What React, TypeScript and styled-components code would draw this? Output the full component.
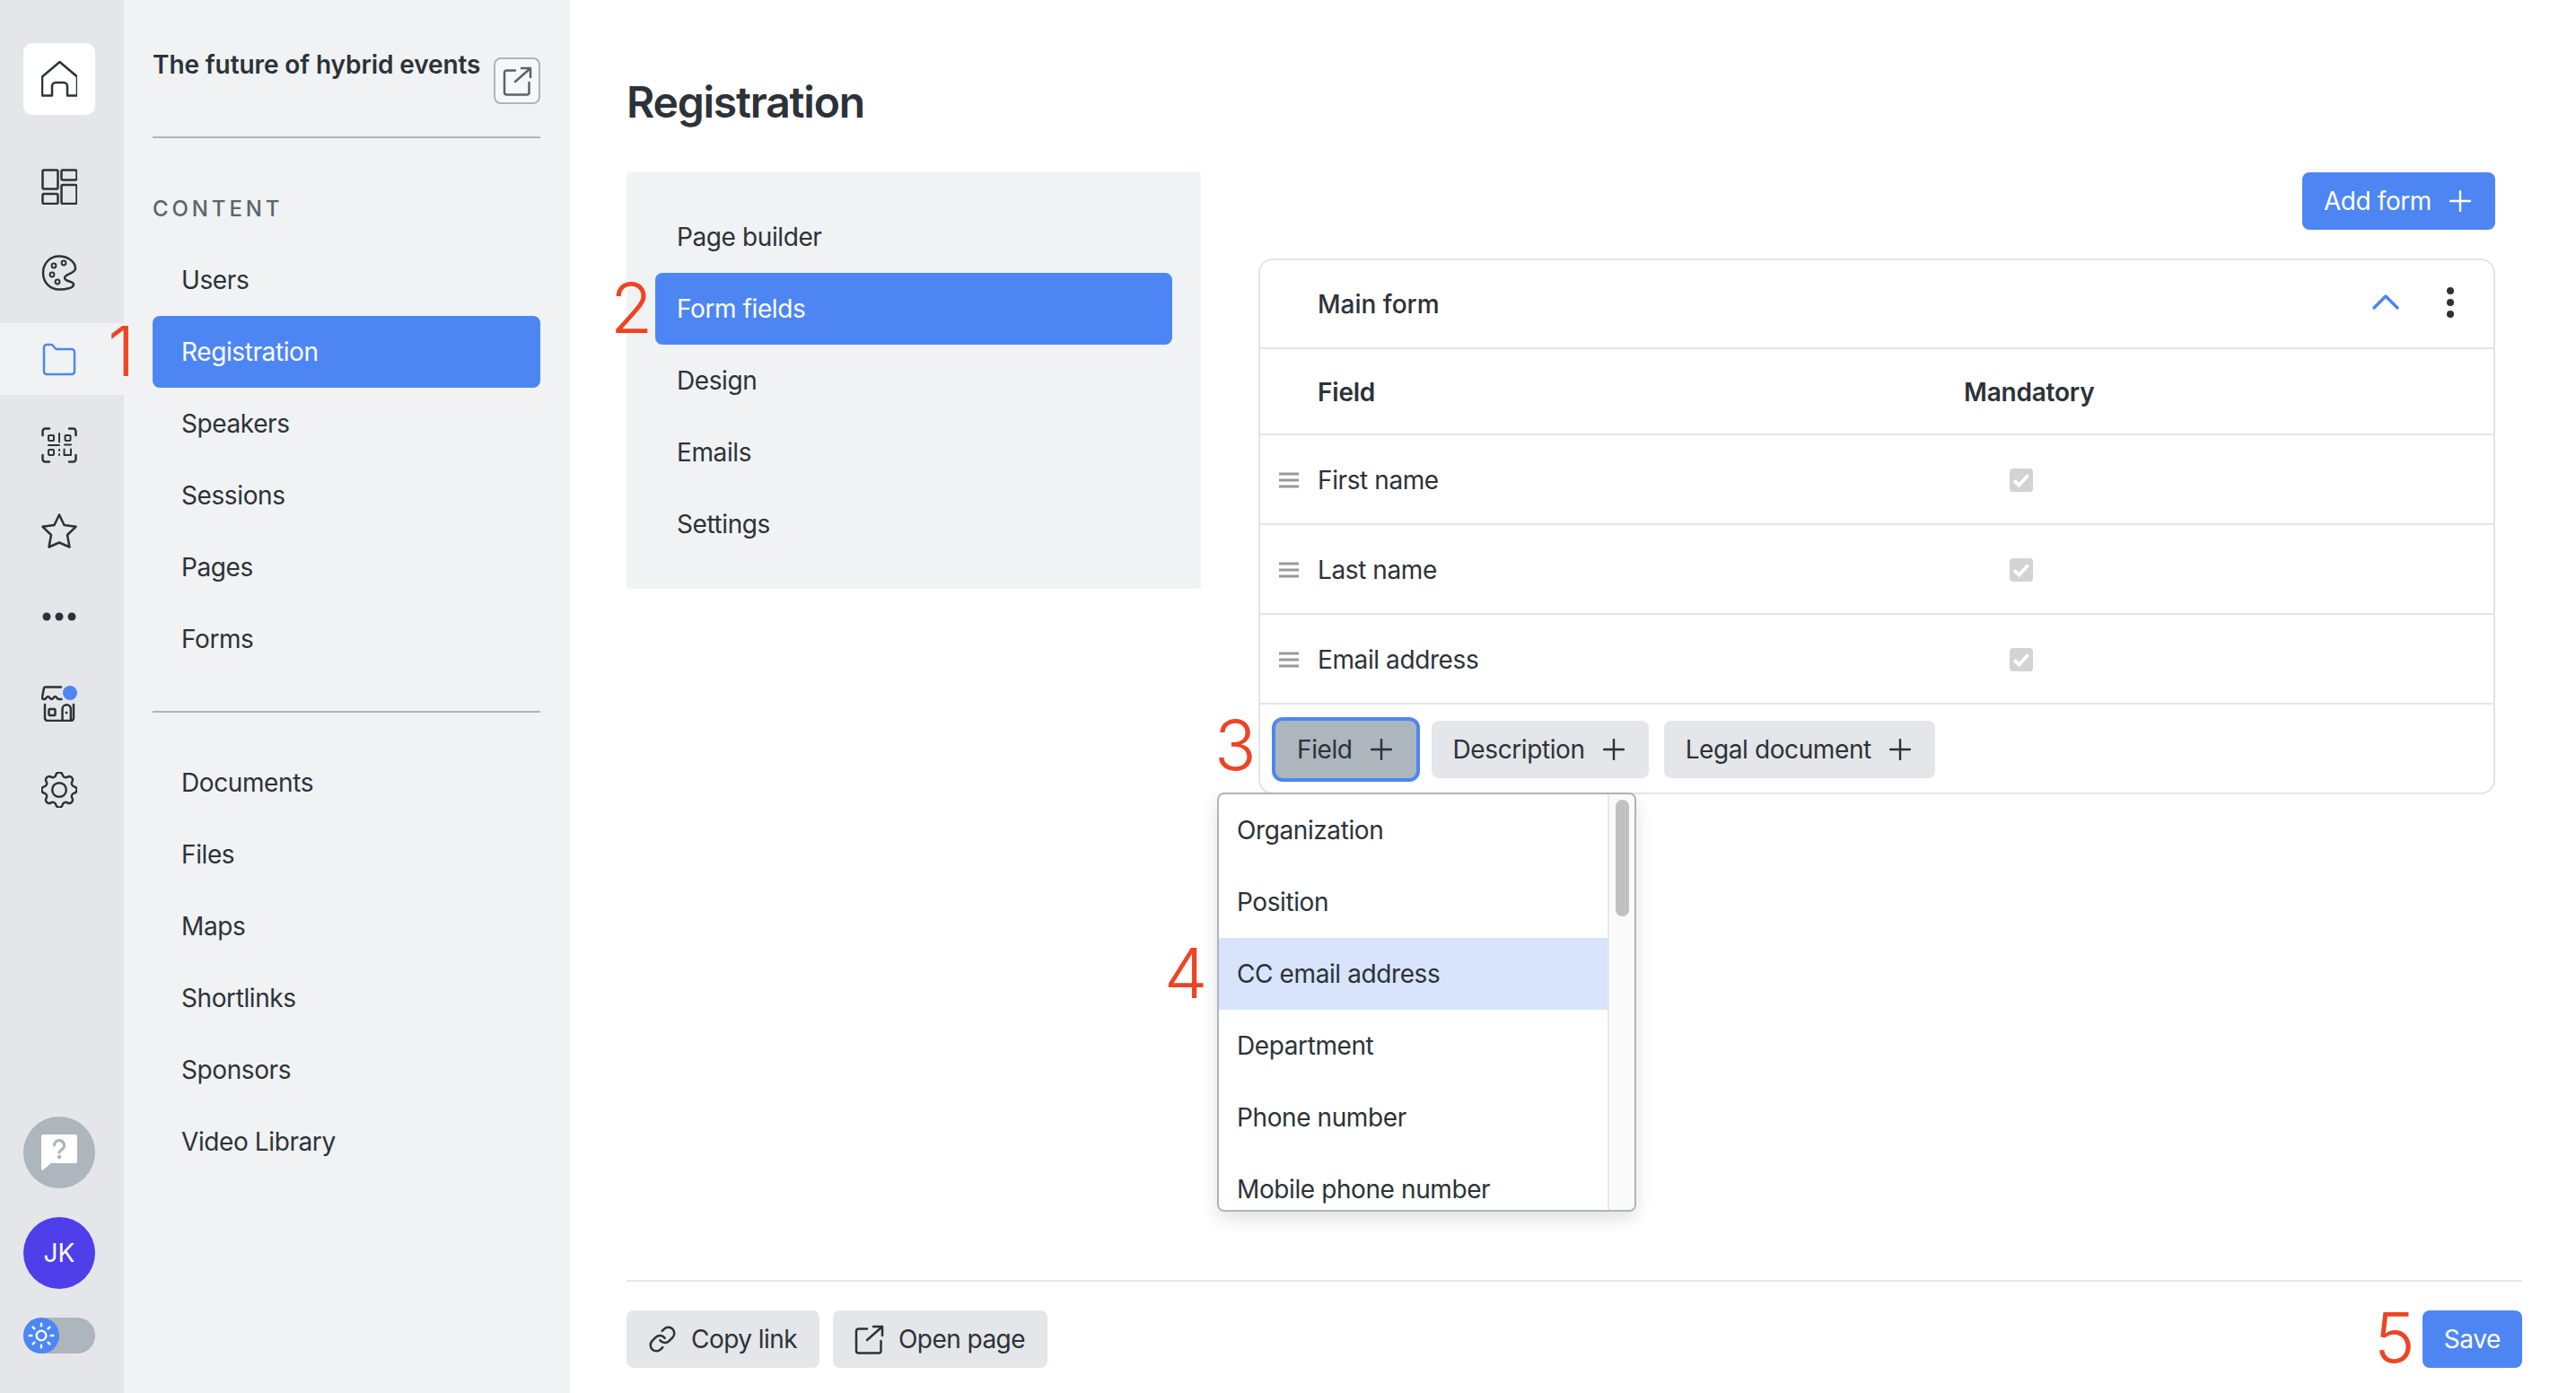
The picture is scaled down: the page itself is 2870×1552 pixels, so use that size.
import React from "react";
import styled, { createGlobalStyle } from "styled-components";
import { Link as LinkIcon, Sun } from "lucide-react";

const Global = createGlobalStyle`
  html, body { margin: 0; padding: 0; background: #fff; }
  body { font-family: Inter, "Noto Sans", sans-serif; color: #2c3238; }
  * { box-sizing: border-box; }
`;

const BLUE = "#4d86f3";
const INK = "#2c3238";

const Page = styled.div`
  position: relative;
  display: flex;
  width: 2870px;
  height: 1552px;
  overflow: hidden;
  font-size: 28px;
  line-height: 32px;
  letter-spacing: -0.4px;
`;

const Rail = styled.nav`
  display: flex;
  flex-direction: column;
  align-items: center;
  width: 138px;
  flex: none;
  padding: 48px 0 44px;
  background: #e4e6e9;
`;

const HomeButton = styled.div`
  display: flex;
  align-items: center;
  justify-content: center;
  width: 80px;
  height: 80px;
  margin: 0 6px 40px 0;
  background: #fff;
  border-radius: 10px;
`;

const RailList = styled.div`
  display: flex;
  flex-direction: column;
  gap: 16px;
  width: 100%;
`;

const RailItem = styled.div<{ $active?: boolean }>`
  display: flex;
  align-items: center;
  justify-content: center;
  height: 80px;
  padding-right: 6px;
  background: ${(p) => (p.$active ? "#f0f2f4" : "transparent")};
`;

const RailFoot = styled.div`
  display: flex;
  flex-direction: column;
  align-items: center;
  gap: 32px;
  margin-top: auto;
  padding-right: 6px;
`;

const Round = styled.div<{ $bg: string }>`
  display: flex;
  align-items: center;
  justify-content: center;
  width: 80px;
  height: 80px;
  border-radius: 50%;
  background: ${(p) => p.$bg};
  color: #fff;
  font-size: 28px;
  letter-spacing: 0;
`;

const Toggle = styled.div`
  width: 80px;
  height: 40px;
  border-radius: 20px;
  background: #adb5bd;
`;

const Knob = styled.div`
  display: flex;
  align-items: center;
  justify-content: center;
  width: 40px;
  height: 40px;
  border-radius: 50%;
  background: ${BLUE};
  color: #fff;
`;

const Side = styled.aside`
  width: 497px;
  flex: none;
  padding: 56px 33px 0 32px;
  background: #f0f2f4;
`;

const SideHead = styled.div`
  display: flex;
  justify-content: space-between;
  align-items: flex-start;
  box-sizing: content-box;
  height: 96px;
  border-bottom: 2px solid #adb5bd;
`;

const EventTitle = styled.div`
  font-weight: 600;
  white-space: nowrap;
  letter-spacing: -0.1px;
`;

const SquareLink = styled.div`
  display: flex;
  align-items: center;
  justify-content: center;
  width: 52px;
  height: 52px;
  margin-top: 8px;
  border: 2px solid #adb5bd;
  border-radius: 8px;
  background: #f6f7f8;
  color: #59636c;
`;

const Eyebrow = styled.div`
  margin: 63px 0 23px;
  font-size: 24px;
  font-weight: 500;
  letter-spacing: 3.9px;
  color: #5b656e;
`;

const SideNav = styled.div`
  display: flex;
  flex-direction: column;
`;

const NavItem = styled.div<{ $active?: boolean }>`
  display: flex;
  align-items: center;
  height: 80px;
  padding-left: 32px;
  border-radius: 8px;
  color: ${(p) => (p.$active ? "#fff" : INK)};
  background: ${(p) => (p.$active ? BLUE : "transparent")};
`;

const SideRule = styled.div`
  height: 2px;
  margin: 40px 0 38px;
  background: #adb5bd;
`;

const Main = styled.main`
  display: flex;
  flex-direction: column;
  flex: 1;
  padding: 82px 60px 28px 63px;
  min-width: 0;
`;

const Title = styled.h1`
  margin: 0 0 46px;
  font-size: 48px;
  line-height: 64px;
  font-weight: 600;
  letter-spacing: -1.2px;
`;

const Columns = styled.div`
  display: flex;
  gap: 64px;
  align-items: flex-start;
`;

const SubPanel = styled.div`
  display: flex;
  flex-direction: column;
  width: 640px;
  padding: 32px;
  background: #f0f2f4;
  border-radius: 4px;
`;

const SubItem = styled(NavItem)`
  padding-left: 24px;
`;

const FormColumn = styled.div`
  display: flex;
  flex-direction: column;
  align-items: flex-end;
  width: 1378px;
`;

const Button = styled.div<{ $variant?: "primary" | "muted" | "focus" }>`
  display: inline-flex;
  align-items: center;
  height: 64px;
  padding: 0 27px 0 24px;
  border-radius: 8px;
  gap: 20px;
  white-space: nowrap;
  background: ${(p) =>
    p.$variant === "primary" ? BLUE : p.$variant === "focus" ? "#adb5bd" : "#e4e6e9"};
  color: ${(p) => (p.$variant === "primary" ? "#fff" : INK)};
  box-shadow: ${(p) => (p.$variant === "focus" ? `0 0 0 4px ${BLUE}` : "none")};
`;

const Card = styled.section`
  position: relative;
  width: 100%;
  margin-top: 32px;
  border: 2px solid #e5e5e5;
  border-radius: 16px;
`;

const CardHead = styled.div`
  display: flex;
  align-items: center;
  height: 99px;
  padding: 0 44px 0 64px;
  border-bottom: 2px solid #e5e5e5;
`;

const CardName = styled.div`
  flex: 1;
  font-weight: 500;
  letter-spacing: 0;
`;

const Grid = styled.div<{ $head?: boolean }>`
  display: grid;
  grid-template-columns: 64px 720px 1fr;
  align-items: center;
  height: ${(p) => (p.$head ? "96px" : "100px")};
  padding-top: 2px;
  border-bottom: 2px solid #e5e5e5;
  font-weight: ${(p) => (p.$head ? 600 : 400)};
  letter-spacing: ${(p) => (p.$head ? "-0.2px" : "-0.4px")};
`;

const Grip = styled.div`
  padding-left: 21px;
  display: flex;
`;

const CheckBox = styled.div`
  display: flex;
  align-items: center;
  justify-content: center;
  width: 26px;
  height: 26px;
  margin-left: 51px;
  background: #d3d3d3;
  border-radius: 4px;
`;

const Actions = styled.div`
  display: flex;
  align-items: center;
  gap: 17px;
  height: 98px;
  padding: 2px 0 0 17px;
`;

const Menu = styled.div`
  position: absolute;
  left: -48px;
  top: 593px;
  display: flex;
  width: 467px;
  height: 467px;
  overflow: hidden;
  background: #fff;
  border: 2px solid #adb5bd;
  border-radius: 8px;
  box-shadow: 0 8px 20px rgba(0, 0, 0, 0.12);
`;

const MenuList = styled.div`
  flex: 1;
  overflow: hidden;
`;

const MenuItem = styled.div<{ $active?: boolean }>`
  display: flex;
  align-items: center;
  height: 80px;
  padding-left: 20px;
  background: ${(p) => (p.$active ? "#d7e4fb" : "transparent")};
`;

const Track = styled.div`
  width: 30px;
  flex: none;
  padding: 6px 6px 0 7px;
  background: #fafafa;
  border-left: 2px solid #e8e8e8;
`;

const Thumb = styled.div`
  width: 15px;
  height: 130px;
  border-radius: 8px;
  background: #c1c1c1;
`;

const Footer = styled.footer`
  display: flex;
  align-items: center;
  gap: 15px;
  margin-top: auto;
  padding-top: 32px;
  border-top: 2px solid #e5e5e5;
`;

const FooterButton = styled(Button)`
  padding: 0 25px 0 24px;
  gap: 16px;
  letter-spacing: -0.55px;
`;

const SaveButton = styled(Button)`
  margin-left: auto;
  padding: 0 24px;
`;

const ChevronSlot = styled.div`
  margin: 0 0 6px;
`;

const Kebab = styled.div`
  margin: 0 0 3px 52px;
`;

const Marker = styled.div<{ $x: number; $y: number }>`
  position: absolute;
  left: ${(p) => p.$x}px;
  top: ${(p) => p.$y}px;
  font-family: Inter, "Liberation Sans", sans-serif;
  font-weight: 300;
  font-size: 77px;
  line-height: 77px;
  letter-spacing: 0;
  color: #ee4423;
`;

const S = { fill: "none", stroke: "currentColor", strokeWidth: 2.5, strokeLinecap: "round", strokeLinejoin: "round" } as const;

const Ico = styled.svg<{ $c?: string }>`
  display: block;
  flex: none;
  color: ${(p) => p.$c || INK};
`;

const I: React.FC<{ children: React.ReactNode; c?: string; vb?: string; size?: number }> = ({ children, c, vb = "0 0 40 40", size = 40 }) => (
  <Ico $c={c} width={size} height={size} viewBox={vb} {...S}>
    {children}
  </Ico>
);

const HomeIcon = () => (
  <I>
    <path d="M1 17.5 20.5 1 40 17.5V38.5H29V28a4 4 0 0 0-4-4H16a4 4 0 0 0-4 4V38.5H1Z" />
  </I>
);

const DashIcon = () => (
  <I>
    <rect x="1.5" y="1.5" width="17" height="21" rx="1.5" />
    <rect x="22.5" y="1.5" width="17" height="11" rx="1.5" />
    <rect x="22.5" y="18" width="17" height="21" rx="1.5" />
    <rect x="1.5" y="28" width="17" height="11" rx="1.5" />
  </I>
);

const PaletteIcon = () => (
  <I>
    <path d="M20 1.5C9 1.5 2 10 2 20c0 11 8 18.5 18 18.5 7 0 16-1.500 16-5.500s-10-3-10-7.500S38 21 38 15C38 8 30 1.500 20 1.500Z" />
    <circle cx="14" cy="12" r="2.400" strokeWidth="2" />
    <circle cx="25" cy="9" r="2.400" strokeWidth="2" />
    <circle cx="12" cy="22" r="2.400" strokeWidth="2" />
    <circle cx="18" cy="30" r="2.400" strokeWidth="2" />
  </I>
);

const FolderIcon = () => (
  <I c={BLUE}>
    <path d="M3 7a3 3 0 0 1 3-3h6l4.500 5H34a3 3 0 0 1 3 3v22a3 3 0 0 1-3 3H6a3 3 0 0 1-3-3Z" />
  </I>
);

const QrIcon = () => (
  <I>
    <path d="M1.500 9V4.500a3 3 0 0 1 3-3H9M31 1.500h4.500a3 3 0 0 1 3 3V9M38.500 31v4.500a3 3 0 0 1-3 3H31M9 38.500H4.500a3 3 0 0 1-3-3V31" />
    <g strokeWidth="2">
      <rect x="8" y="9" width="6" height="6" rx="1" />
      <rect x="26.500" y="9" width="6" height="6" rx="1" />
      <rect x="8" y="25" width="6" height="6" rx="1" />
      <path d="M20 7v9.500M8 20h12M26 19.500h7M20 25v1M20 30v1M25.500 24.500V31H33v-6.500" />
    </g>
  </I>
);

const StarIcon = () => (
  <I>
    <path d="M20 1.500 25.500 13 38.500 14.800 29 24 31.500 37.500 20 32.500 8.500 37.500 11 24 1.500 14.800 14.500 13Z" />
  </I>
);

const DotsIcon = () => (
  <Ico width={40} height={40} viewBox="0 0 40 40">
    <g fill="currentColor">
      <circle cx="6" cy="19" r="4.500" />
      <circle cx="20" cy="19" r="4.500" />
      <circle cx="34" cy="19" r="4.500" />
    </g>
  </Ico>
);

const StoreIcon = () => (
  <I>
    <path d="M22 1.500H4.500A1.500 1.500 0 0 0 3 2.700L1 12.500c-.4 1.800 1 2.500 2.500 2.500 2 0 2.500-3 4-3s2 3 4 3 2.500-3 4-3 2 3 4 3h3" />
    <path d="M4 21v15a3 3 0 0 0 3 3h26a3 3 0 0 0 3-3V21" />
    <rect x="8.500" y="26" width="7" height="7" rx="1" />
    <path d="M23.500 39V26a4.700 4.700 0 0 1 9.400 0V39" />
    <circle cx="28" cy="30" r="1.500" fill="currentColor" stroke="none" />
    <circle cx="32" cy="8" r="8" fill={BLUE} stroke="none" />
  </I>
);

const GearIcon = () => (
  <I vb="2.800 2.800 18.400 18.400">
    <g strokeWidth="1.130">
      <path d="M10.325 4.317c.426 -1.756 2.924 -1.756 3.350 0a1.724 1.724 0 0 0 2.573 1.066c1.543 -.94 3.310 .826 2.370 2.370a1.724 1.724 0 0 0 1.065 2.572c1.756 .426 1.756 2.924 0 3.350a1.724 1.724 0 0 0 -1.066 2.573c.94 1.543 -.826 3.310 -2.370 2.370a1.724 1.724 0 0 0 -2.572 1.065c-.426 1.756 -2.924 1.756 -3.350 0a1.724 1.724 0 0 0 -2.573 -1.066c-1.543 .94 -3.310 -.826 -2.370 -2.370a1.724 1.724 0 0 0 -1.065 -2.572c-1.756 -.426 -1.756 -2.924 0 -3.350a1.724 1.724 0 0 0 1.066 -2.573c-.94 -1.543 .826 -3.310 2.370 -2.370c1 .608 2.296 .07 2.572 -1.065z" />
      <circle cx="12" cy="12" r="3.600" />
    </g>
  </I>
);

const HelpIcon = () => (
  <Ico width={40} height={40} viewBox="0 0 40 40">
    <path fill="#fff" d="M2 0H38a2 2 0 0 1 2 2V30a2 2 0 0 1-2 2H11L2 39.500A1.200 1.200 0 0 1 0 38.500V2A2 2 0 0 1 2 0Z" />
    <path fill="none" stroke="#adb5bd" strokeWidth="3.200" strokeLinecap="round" d="M14.500 12a5.500 5.500 0 1 1 8 5c-1.500 1-2.500 2-2.500 3" />
    <circle cx="20" cy="25" r="2.200" fill="#adb5bd" />
  </Ico>
);

const ExternalIcon: React.FC<{ c?: string }> = ({ c }) => (
  <I c={c} vb="0 0 33 33" size={33}>
    <path d="M14 4.500H4.500A2.500 2.500 0 0 0 2 7v22a2.500 2.500 0 0 0 2.500 2.500H27a2.500 2.500 0 0 0 2.500-2.500v-11M14 17 31 2M21 2h10v10" />
  </I>
);

const PlusIcon: React.FC<{ c?: string }> = ({ c }) => (
  <I c={c} vb="0 0 24 24" size={24}>
    <path strokeWidth="2.400" d="M1 12H23M12 1V23" />
  </I>
);

const ChevronIcon = () => (
  <I c={BLUE} vb="0 0 32 20" size={32}>
    <path strokeWidth="3.500" d="M3 17 16 4 29 17" />
  </I>
);

const KebabIcon = () => (
  <Ico width={8} height={34} viewBox="0 0 8 34">
    <g fill="currentColor">
      <circle cx="4" cy="4" r="4" />
      <circle cx="4" cy="17" r="4" />
      <circle cx="4" cy="30" r="4" />
    </g>
  </Ico>
);

const GripIcon = () => (
  <Ico width={22} height={18} viewBox="0 0 22 18">
    <path stroke="#999" strokeWidth="3" d="M0 2H22M0 9H22M0 16H22" />
  </Ico>
);

const CheckMark = () => (
  <Ico width={26} height={26} viewBox="0 0 26 26">
    <path fill="none" stroke="#fff" strokeWidth="4" d="M5 13.500 10.500 18.500 20.500 7.500" />
  </Ico>
);

const railIcons = [
  { key: "dash", node: <DashIcon /> },
  { key: "palette", node: <PaletteIcon /> },
  { key: "folder", node: <FolderIcon />, active: true },
  { key: "qr", node: <QrIcon /> },
  { key: "star", node: <StarIcon /> },
  { key: "dots", node: <DotsIcon /> },
  { key: "store", node: <StoreIcon /> },
  { key: "gear", node: <GearIcon /> },
];

const content = ["Users", "Registration", "Speakers", "Sessions", "Pages", "Forms"];
const library = ["Documents", "Files", "Maps", "Shortlinks", "Sponsors", "Video Library"];
const sub = ["Page builder", "Form fields", "Design", "Emails", "Settings"];
const fields = ["First name", "Last name", "Email address"];
const options = ["Organization", "Position", "CC email address", "Department", "Phone number", "Mobile phone number"];

export default function App() {
  return (
    <Page>
      <Global />
      <Rail>
        <HomeButton>
          <HomeIcon />
        </HomeButton>
        <RailList>
          {railIcons.map((r) => (
            <RailItem key={r.key} $active={r.active}>
              {r.node}
            </RailItem>
          ))}
        </RailList>
        <RailFoot>
          <Round $bg="#adb5bd">
            <HelpIcon />
          </Round>
          <Round $bg="#4f3fea">JK</Round>
          <Toggle>
            <Knob>
              <Sun size={32} strokeWidth={1.8} />
            </Knob>
          </Toggle>
        </RailFoot>
      </Rail>

      <Side>
        <SideHead>
          <EventTitle>The future of hybrid events</EventTitle>
          <SquareLink>
            <ExternalIcon c="#59636c" />
          </SquareLink>
        </SideHead>
        <Eyebrow>CONTENT</Eyebrow>
        <SideNav>
          {content.map((t) => (
            <NavItem key={t} $active={t === "Registration"}>
              {t}
            </NavItem>
          ))}
        </SideNav>
        <SideRule />
        <SideNav>
          {library.map((t) => (
            <NavItem key={t}>{t}</NavItem>
          ))}
        </SideNav>
      </Side>

      <Main>
        <Title>Registration</Title>
        <Columns>
          <SubPanel>
            {sub.map((t) => (
              <SubItem key={t} $active={t === "Form fields"}>
                {t}
              </SubItem>
            ))}
          </SubPanel>
          <FormColumn>
            <Button $variant="primary">
              Add form
              <PlusIcon c="#fff" />
            </Button>
            <Card>
              <CardHead>
                <CardName>Main form</CardName>
                <ChevronSlot>
                  <ChevronIcon />
                </ChevronSlot>
                <Kebab>
                  <KebabIcon />
                </Kebab>
              </CardHead>
              <Grid $head>
                <span />
                <span>Field</span>
                <span>Mandatory</span>
              </Grid>
              {fields.map((f) => (
                <Grid key={f}>
                  <Grip>
                    <GripIcon />
                  </Grip>
                  <span>{f}</span>
                  <CheckBox>
                    <CheckMark />
                  </CheckBox>
                </Grid>
              ))}
              <Actions>
                <Button $variant="focus">
                  Field
                  <PlusIcon />
                </Button>
                <Button>
                  Description
                  <PlusIcon />
                </Button>
                <Button>
                  Legal document
                  <PlusIcon />
                </Button>
              </Actions>
              <Menu>
                <MenuList>
                  {options.map((o) => (
                    <MenuItem key={o} $active={o === "CC email address"}>
                      {o}
                    </MenuItem>
                  ))}
                </MenuList>
                <Track>
                  <Thumb />
                </Track>
              </Menu>
            </Card>
          </FormColumn>
        </Columns>
        <Footer>
          <FooterButton>
            <LinkIcon size={32} strokeWidth={1.9} />
            Copy link
          </FooterButton>
          <FooterButton>
            <ExternalIcon />
            Open page
          </FooterButton>
          <SaveButton $variant="primary">Save</SaveButton>
        </Footer>
      </Main>

      <Marker $x={120} $y={353}>1</Marker>
      <Marker $x={680} $y={305}>2</Marker>
      <Marker $x={1353} $y={792}>3</Marker>
      <Marker $x={1297} $y={1046}>4</Marker>
      <Marker $x={2645} $y={1452}>5</Marker>
    </Page>
  );
}
